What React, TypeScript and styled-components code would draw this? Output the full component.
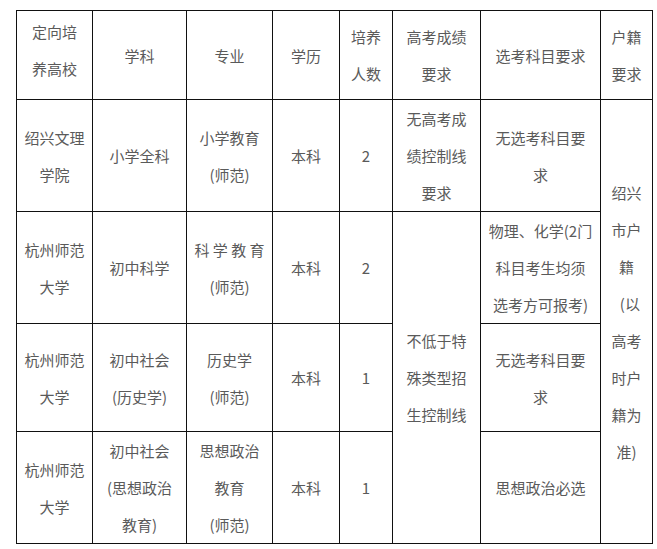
import React from 'react'
import styled, { createGlobalStyle } from 'styled-components'

const GlobalStyle = createGlobalStyle`
  html, body {
    margin: 0;
    padding: 0;
    background: #ffffff;
  }
`

const Page = styled.div`
  padding: 10px 0 0 16px;
`

const Table = styled.table`
  border-collapse: collapse;
  table-layout: fixed;
  width: 637px;
  font-family: 'Noto Sans CJK SC', 'Noto Sans', sans-serif;
  font-size: 15px;
  color: #5a5a5a;
`

const Row = styled.tr<{ $h: number }>`
  height: ${(p) => p.$h}px;
`

const Cell = styled.td<{ $lift?: number }>`
  border: 1px solid #111111;
  padding: 0 0 ${(p) => p.$lift ?? 0}px 0;
  text-align: center;
  vertical-align: middle;
  line-height: 37px;
  white-space: nowrap;
  overflow: hidden;
`

const COLS = [76, 94, 86, 67, 53, 88, 120, 52]

function Text({ lines }: { lines: string[] }) {
  return (
    <>
      {lines.map((l, i) => (
        <React.Fragment key={i}>
          {i > 0 && <br />}
          {l}
        </React.Fragment>
      ))}
    </>
  )
}

export default function App() {
  return (
    <Page>
      <GlobalStyle />
      <Table>
        <colgroup>
          {COLS.map((w, i) => (
            <col key={i} style={{ width: w }} />
          ))}
        </colgroup>
        <tbody>
          <Row $h={89}>
            <Cell $lift={11}><Text lines={['定向培', '养高校']} /></Cell>
            <Cell>学科</Cell>
            <Cell>专业</Cell>
            <Cell>学历</Cell>
            <Cell><Text lines={['培养', '人数']} /></Cell>
            <Cell><Text lines={['高考成绩', '要求']} /></Cell>
            <Cell>选考科目要求</Cell>
            <Cell><Text lines={['户籍', '要求']} /></Cell>
          </Row>
          <Row $h={112}>
            <Cell><Text lines={['绍兴文理', '学院']} /></Cell>
            <Cell>小学全科</Cell>
            <Cell><Text lines={['小学教育', '(师范)']} /></Cell>
            <Cell>本科</Cell>
            <Cell>2</Cell>
            <Cell><Text lines={['无高考成', '绩控制线', '要求']} /></Cell>
            <Cell><Text lines={['无选考科目要', '求']} /></Cell>
            <Cell rowSpan={4}>
              <Text lines={['绍兴', '市户', '籍', '\u00a0\u00a0(以', '高考', '时户', '籍为', '准)']} />
            </Cell>
          </Row>
          <Row $h={112}>
            <Cell><Text lines={['杭州师范', '大学']} /></Cell>
            <Cell>初中科学</Cell>
            <Cell><Text lines={['科 学 教 育', '(师范)']} /></Cell>
            <Cell>本科</Cell>
            <Cell>2</Cell>
            <Cell rowSpan={3}>
              <Text lines={['不低于特', '殊类型招', '生控制线']} />
            </Cell>
            <Cell><Text lines={['物理、化学(2门', '科目考生均须', '选考方可报考)']} /></Cell>
          </Row>
          <Row $h={108}>
            <Cell><Text lines={['杭州师范', '大学']} /></Cell>
            <Cell><Text lines={['初中社会', '(历史学)']} /></Cell>
            <Cell><Text lines={['历史学', '(师范)']} /></Cell>
            <Cell>本科</Cell>
            <Cell>1</Cell>
            <Cell><Text lines={['无选考科目要', '求']} /></Cell>
          </Row>
          <Row $h={112}>
            <Cell><Text lines={['杭州师范', '大学']} /></Cell>
            <Cell><Text lines={['初中社会', '(思想政治', '教育)']} /></Cell>
            <Cell><Text lines={['思想政治', '教育', '(师范)']} /></Cell>
            <Cell>本科</Cell>
            <Cell>1</Cell>
            <Cell>思想政治必选</Cell>
          </Row>
        </tbody>
      </Table>
    </Page>
  )
}
